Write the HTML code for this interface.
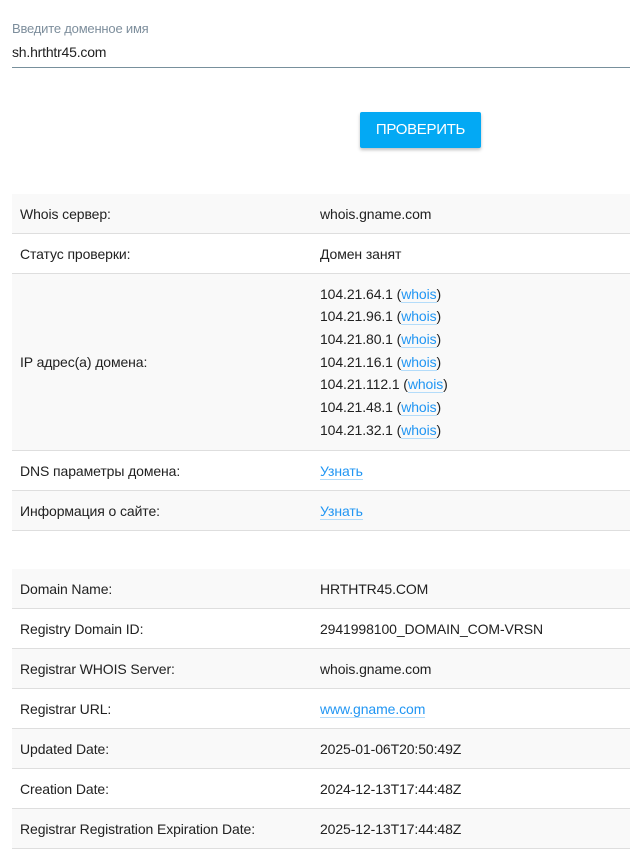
<!DOCTYPE html>
<html><head><meta charset="utf-8">
<style>
body{margin:0;background:#fff;font-family:"Liberation Sans",Arial,sans-serif;color:#212121;width:630px;height:851px;overflow:hidden;position:relative}
.lbl{position:absolute;left:12px;top:21px;font-size:13px;color:#7d8e9c;letter-spacing:-0.2px}
.val{position:absolute;left:12px;top:44px;font-size:14px;letter-spacing:-0.2px}
.line{position:absolute;left:12px;right:0;top:67px;height:1px;background:#78909c}
.btn{position:absolute;left:360px;top:112px;width:121px;height:36px;background:#03a9f4;color:#fff;font-size:15px;letter-spacing:-0.3px;text-align:center;line-height:36px;border-radius:2px;box-shadow:0 2px 3px rgba(0,0,0,.25)}
table{position:absolute;left:12px;width:618px;border-collapse:collapse;font-size:14px;letter-spacing:-0.1px}
td{height:39px;border-bottom:1px solid #dedede;padding:0 0 0 8px;vertical-align:middle}
td:first-child{width:292px}
tr.g td{background:#f9f9f9}
a{color:#2196f3;text-decoration:none;border-bottom:1px solid #b3dcfa}
.ip div{height:22.7px;line-height:22.7px}
</style></head><body>
<div class="lbl">Введите доменное имя</div>
<div class="val">sh.hrthtr45.com</div>
<div class="line"></div>
<div class="btn">ПРОВЕРИТЬ</div>
<table style="top:194px">
<tr class="g"><td>Whois сервер:</td><td>whois.gname.com</td></tr>
<tr><td>Статус проверки:</td><td>Домен занят</td></tr>
<tr class="g"><td style="height:176px">IP адрес(а) домена:</td><td class="ip">
<div>104.21.64.1 (<a>whois</a>)</div><div>104.21.96.1 (<a>whois</a>)</div><div>104.21.80.1 (<a>whois</a>)</div><div>104.21.16.1 (<a>whois</a>)</div><div>104.21.112.1 (<a>whois</a>)</div><div>104.21.48.1 (<a>whois</a>)</div><div>104.21.32.1 (<a>whois</a>)</div></td></tr>
<tr><td>DNS параметры домена:</td><td><a>Узнать</a></td></tr>
<tr class="g"><td>Информация о сайте:</td><td><a>Узнать</a></td></tr>
</table>
<table style="top:569px">
<tr class="g"><td>Domain Name:</td><td>HRTHTR45.COM</td></tr>
<tr><td>Registry Domain ID:</td><td>2941998100_DOMAIN_COM-VRSN</td></tr>
<tr class="g"><td>Registrar WHOIS Server:</td><td>whois.gname.com</td></tr>
<tr><td>Registrar URL:</td><td><a>www.gname.com</a></td></tr>
<tr class="g"><td>Updated Date:</td><td>2025-01-06T20:50:49Z</td></tr>
<tr><td>Creation Date:</td><td>2024-12-13T17:44:48Z</td></tr>
<tr class="g"><td>Registrar Registration Expiration Date:</td><td>2025-12-13T17:44:48Z</td></tr>
</table>
</body></html>
